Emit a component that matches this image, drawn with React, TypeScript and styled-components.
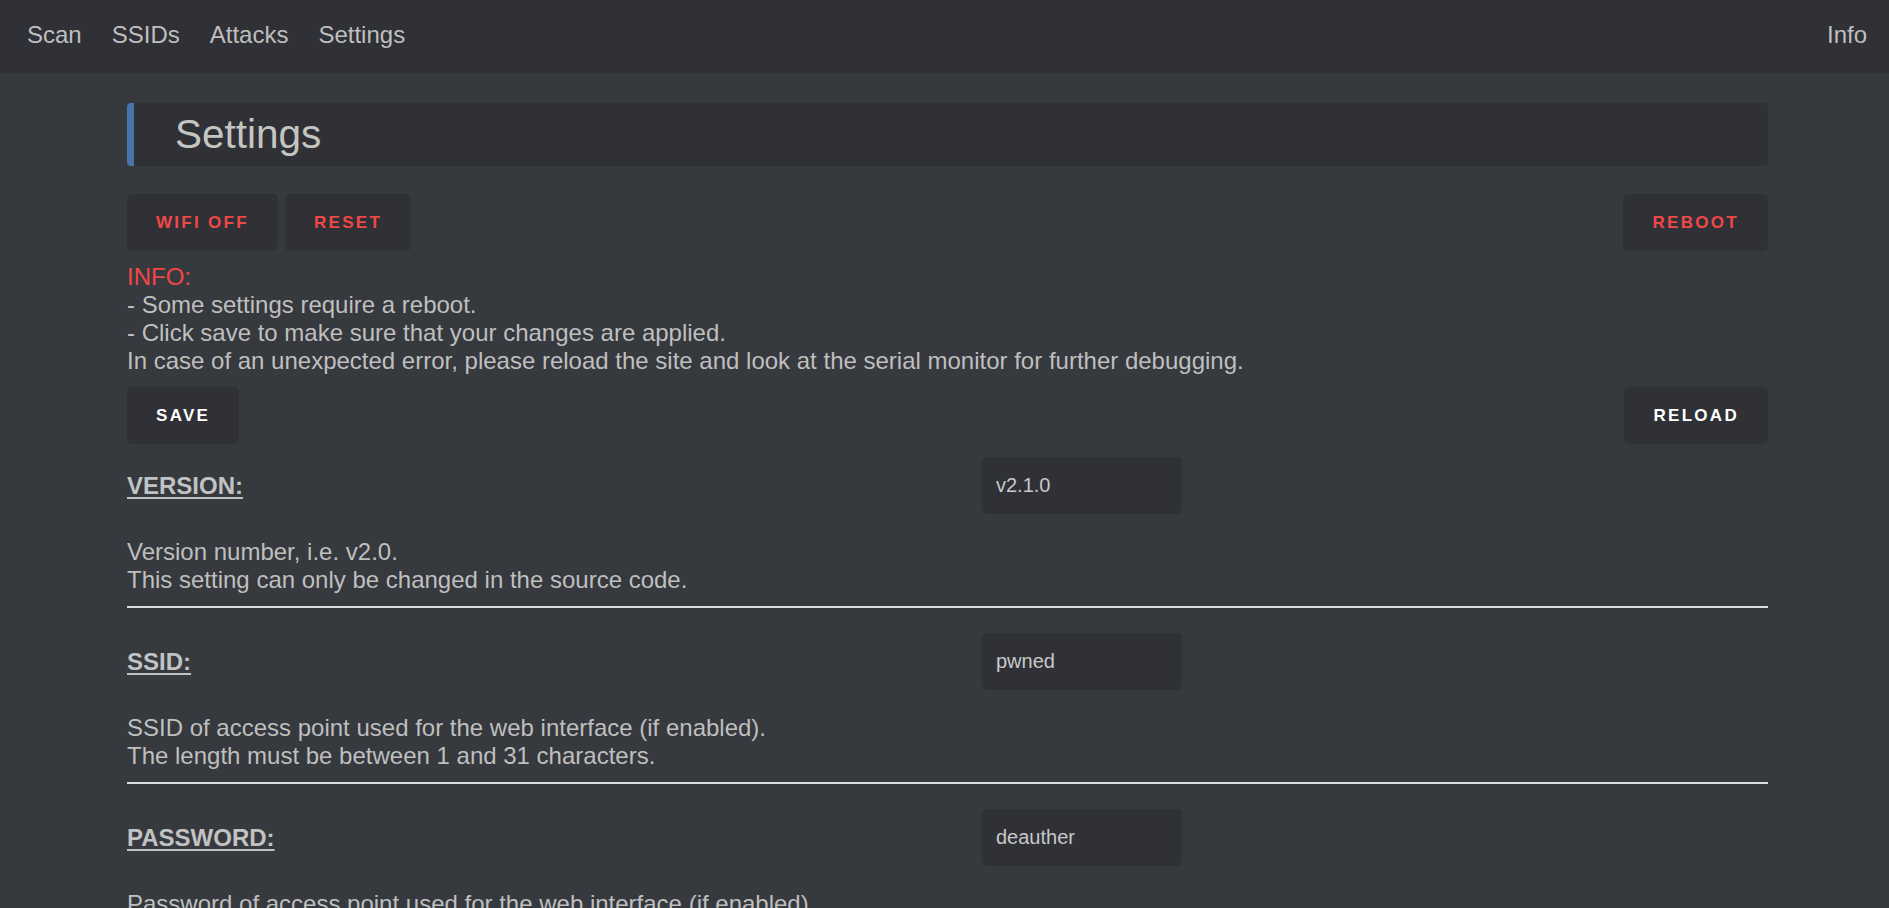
import React from "react";
import styled, { createGlobalStyle } from "styled-components";

const GlobalStyle = createGlobalStyle`
  html, body {
    margin: 0;
    padding: 0;
    background: #36393e;
  }
  body {
    color: #bfbfbf;
    font-family: "Liberation Sans", Arial, sans-serif;
    font-size: 24px;
    line-height: 28px;
  }
  * { box-sizing: border-box; }
`;

const Nav = styled.nav`
  display: flex;
  align-items: center;
  height: 73px;
  background: #2f3136;
  padding: 0 7px 3px 12px;
`;

const NavLink = styled.a<{ $right?: boolean }>`
  padding: 0 15px;
  color: #bfbfbf;
  text-decoration: none;
  font-size: 24px;
  line-height: 28px;
  margin-left: ${(p) => (p.$right ? "auto" : "0")};
`;

const Container = styled.main`
  padding: 30px 121px 0 127px;
`;

const Title = styled.h1`
  margin: 0;
  height: 63px;
  background: #2f3136;
  border-left: 7px solid #4974a9;
  border-radius: 4px;
  padding: 0 41px;
  font-size: 40.5px;
  font-weight: 400;
  line-height: 63px;
  color: #c4c4c0;
`;

const ButtonRow = styled.div<{ $top: number }>`
  display: flex;
  gap: 7px;
  margin-top: ${(p) => p.$top}px;
`;

const Button = styled.button<{ $tone: "red" | "white"; $push?: boolean }>`
  height: 57px;
  padding: 0 29px;
  background: #2f3136;
  border: none;
  border-radius: 5px;
  font-family: "Liberation Sans", Arial, sans-serif;
  font-size: 17px;
  font-weight: 700;
  letter-spacing: 2.3px;
  text-transform: uppercase;
  color: ${(p) => (p.$tone === "red" ? "#f04747" : "#ffffff")};
  margin-left: ${(p) => (p.$push ? "auto" : "0")};
  cursor: pointer;
`;

const InfoText = styled.p`
  margin: 12px 0 0;
  line-height: 28px;
`;

const Red = styled.span`
  color: #f04747;
`;

const Settings = styled.div`
  margin-top: 13px;
`;

const Section = styled.section``;

const SettingRow = styled.div`
  display: grid;
  grid-template-columns: 855px 200px;
  align-items: center;
`;

const Label = styled.label`
  font-weight: 700;
  text-decoration: underline;
  text-underline-offset: 3px;
  text-decoration-thickness: 2px;
  color: #c2c2c2;
`;

const Input = styled.input`
  width: 200px;
  height: 57px;
  background: #2f3136;
  border: none;
  border-radius: 5px;
  padding: 0 14px;
  font-family: "Liberation Sans", Arial, sans-serif;
  font-size: 20px;
  color: #c8c8c8;
  outline: none;
`;

const Desc = styled.p`
  margin: 24px 0 0;
  line-height: 28px;
`;

const Rule = styled.hr`
  margin: 12px 0 25px;
  height: 2px;
  border: none;
  background: #dcdcdc;
`;

const settings = [
  {
    id: "version",
    label: "VERSION:",
    value: "v2.1.0",
    desc: ["Version number, i.e. v2.0.", "This setting can only be changed in the source code."],
  },
  {
    id: "ssid",
    label: "SSID:",
    value: "pwned",
    desc: [
      "SSID of access point used for the web interface (if enabled).",
      "The length must be between 1 and 31 characters.",
    ],
  },
  {
    id: "password",
    label: "PASSWORD:",
    value: "deauther",
    desc: [
      "Password of access point used for the web interface (if enabled).",
      "The length must be between 8 and 63 characters.",
    ],
  },
];

export default function App() {
  return (
    <>
      <GlobalStyle />
      <Nav>
        <NavLink href="#">Scan</NavLink>
        <NavLink href="#">SSIDs</NavLink>
        <NavLink href="#">Attacks</NavLink>
        <NavLink href="#">Settings</NavLink>
        <NavLink href="#" $right>
          Info
        </NavLink>
      </Nav>
      <Container>
        <Title>Settings</Title>
        <ButtonRow $top={28}>
          <Button $tone="red">WiFi off</Button>
          <Button $tone="red">Reset</Button>
          <Button $tone="red" $push>
            Reboot
          </Button>
        </ButtonRow>
        <InfoText>
          <Red>INFO:</Red>
          <br />- Some settings require a reboot.
          <br />- Click save to make sure that your changes are applied.
          <br />
          In case of an unexpected error, please reload the site and look at the serial monitor for further
          debugging.
        </InfoText>
        <ButtonRow $top={12}>
          <Button $tone="white">Save</Button>
          <Button $tone="white" $push>
            Reload
          </Button>
        </ButtonRow>
        <Settings>
          {settings.map((s) => (
            <Section key={s.id}>
              <SettingRow>
                <Label htmlFor={s.id}>{s.label}</Label>
                <Input id={s.id} type="text" defaultValue={s.value} />
              </SettingRow>
              <Desc>
                {s.desc[0]}
                <br />
                {s.desc[1]}
              </Desc>
              <Rule />
            </Section>
          ))}
        </Settings>
      </Container>
    </>
  );
}
